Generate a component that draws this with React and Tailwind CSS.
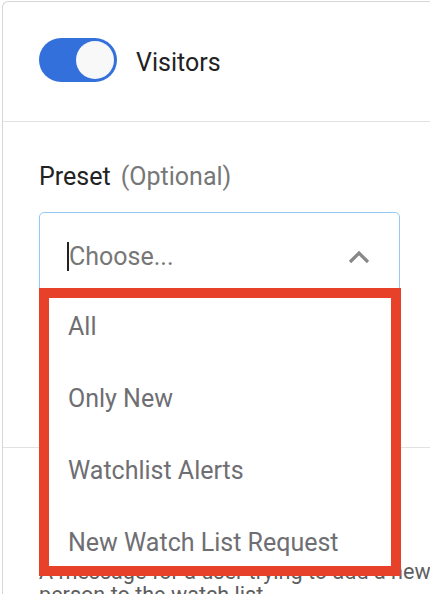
import { useState } from 'react';

const options = ['All', 'Only New', 'Watchlist Alerts', 'New Watch List Request'];

function Toggle({ on }) {
  return (
    <div className={`flex h-[44px] w-[78px] items-center rounded-full px-[3px] ${on ? 'justify-end bg-[#3470dc]' : 'justify-start bg-[#c8c8c8]'}`}>
      <div className="h-[38px] w-[38px] rounded-full bg-[#f8f8f8]" />
    </div>
  );
}

export default function App() {
  const [enabled] = useState(true);

  return (
    <div className="relative h-[594px] w-[430px] overflow-hidden bg-white font-['Roboto',sans-serif]">
      <div className="ml-[2px] mt-[1px] rounded-tl-md border-l border-t border-[#d6d6d6]">
        {/* Visitors toggle */}
        <div className="flex h-[120px] items-start gap-[19px] border-b border-[#e2e2e2] pl-[36px] pt-[36px]">
          <Toggle on={enabled} />
          <span className="mt-[3px] text-[25px] leading-[44px] text-[#222]">Visitors</span>
        </div>

        {/* Preset select */}
        <div className="h-[326px] border-b border-[#e2e2e2] pl-[36px] pt-[40px]">
          <div className="text-[25px] leading-[30px] text-[#222]">
            Preset <span className="ml-[4px] text-[#777]">(Optional)</span>
          </div>
          <div className="mt-[20px] flex h-[83px] w-[361px] items-center rounded-[5px] border border-[#93c9f7] pl-[27px] pr-[29px] pt-[6px]">
            <span className="h-[29px] w-[2px] bg-[#222]" />
            <span className="flex-1 text-[25px] leading-[30px] text-[#777]">Choose...</span>
            <svg width="22" height="14" viewBox="0 0 22 14" fill="none">
              <path d="M2 12 L11 3 L20 12" stroke="#888" strokeWidth="3.2" />
            </svg>
          </div>
        </div>

        {/* Message */}
        <div className="pl-[36px] pt-[112px]">
          <p className="whitespace-nowrap text-[21.6px] leading-[23px] text-[#5e5e5e]">
            A message for a user trying to add a new
            <br />
            person to the watch list
          </p>
        </div>
      </div>

      {/* Open dropdown menu */}
      <div className="absolute left-[39px] top-[288px] h-[288px] w-[362px] overflow-hidden border-[10px] border-[#e8412a] bg-white">
        {options.map((opt) => (
          <div key={opt} className="h-[72px] shrink-0 pl-[19px] pt-[14px] text-[25px] leading-[30px] text-[#6e6e73]">
            {opt}
          </div>
        ))}
      </div>
    </div>
  );
}
